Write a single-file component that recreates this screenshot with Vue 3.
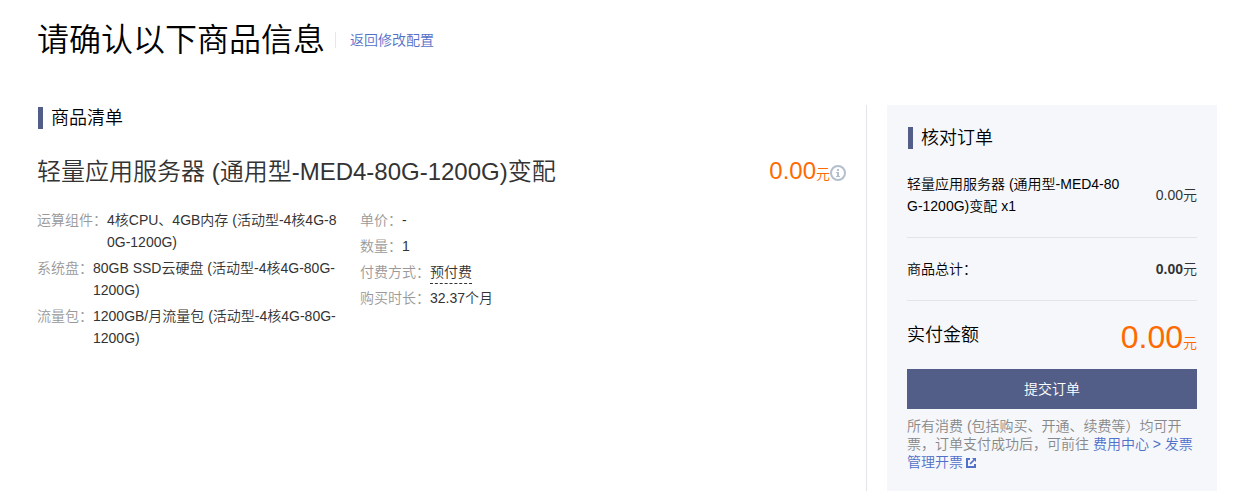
<template>
    <div class="order-page">

        <header class="page-header">
            <h1>请确认以下商品信息</h1>
            <a class="back-link" href="#">返回修改配置</a>
        </header>

        <div class="page-body">
            <main class="goods">
                <h2 class="section-title">商品清单</h2>

                <div class="goods-head">
                    <h3>{{ goods.name }}</h3>
                    <div class="goods-price">
                        <span class="amount">{{ goods.price }}</span><span class="unit">元</span>
                        <svg class="info-icon" viewBox="0 0 16 16" width="16" height="16">
                            <circle cx="8" cy="8" r="7" fill="none" stroke="#b3bfcc" stroke-width="2" />
                            <path d="M7 4h2v2H7zM6 7h3v4h1v1H6v-1h1V8H6z" fill="#b3bfcc" />
                        </svg>
                    </div>
                </div>

                <div class="goods-detail">
                    <dl v-for="(column, index) in detailColumns" :key="index" class="detail-column">
                        <div v-for="item in column" :key="item.label" class="detail-row">
                            <dt>{{ item.label }}：</dt>
                            <dd :class="{ 'has-tip': item.tip }">{{ item.value }}</dd>
                        </div>
                    </dl>
                </div>
            </main>

            <aside class="summary">
                <h2 class="section-title">核对订单</h2>

                <div class="summary-row summary-goods">
                    <span class="summary-name">{{ goods.name }} x{{ goods.count }}</span>
                    <span class="summary-value">{{ goods.price }}元</span>
                </div>
                <div class="summary-row summary-total">
                    <span>商品总计：</span>
                    <span class="summary-value"><b>{{ goods.price }}</b>元</span>
                </div>
                <div class="summary-pay">
                    <span class="pay-label">实付金额</span>
                    <span class="pay-price"><span class="amount">{{ goods.price }}</span><span class="unit">元</span></span>
                </div>

                <button type="button" class="submit-btn">提交订单</button>

                <p class="invoice-note">
                    所有消费 (包括购买、开通、续费等）均可开票，订单支付成功后，可前往 <a href="#">费用中心 &gt; 发票管理开票<svg class="link-icon" viewBox="0 0 10 10" width="10" height="10">
                            <path d="M4 1H1v8h8V6" fill="none" stroke="currentColor" stroke-width="2" />
                            <path d="M6 0h4v4L8.6 2.6 4.7 6.5 3.5 5.3 7.4 1.4z" fill="currentColor" />
                        </svg></a>
                </p>
            </aside>
        </div>

    </div>
</template>

<script setup>
import { ref } from 'vue';

const goods = ref({
    name: '轻量应用服务器 (通用型-MED4-80G-1200G)变配',
    price: '0.00',
    count: 1
});

const detailColumns = ref([
    [
        { label: '运算组件', value: '4核CPU、4GB内存 (活动型-4核4G-80G-1200G)' },
        { label: '系统盘', value: '80GB SSD云硬盘 (活动型-4核4G-80G-1200G)' },
        { label: '流量包', value: '1200GB/月流量包 (活动型-4核4G-80G-1200G)' }
    ],
    [
        { label: '单价', value: '-' },
        { label: '数量', value: '1' },
        { label: '付费方式', value: '预付费', tip: true },
        { label: '购买时长', value: '32.37个月' }
    ]
]);
</script>

<style>
body {
    margin: 0;
    background: #fff;
}
</style>

<style scoped>
.order-page {
    box-sizing: border-box;
    padding: 16px 21px 10px 37px;
    font-family: "Liberation Sans", "Noto Sans CJK SC", sans-serif;
    font-size: 14px;
    font-weight: 350;
    line-height: 22px;
    color: #333;
}

h1,
h2,
h3,
dl,
dd,
p {
    margin: 0;
    font-weight: 350;
}

b {
    font-weight: 700;
}

a {
    color: #5170c9;
    text-decoration: none;
}

/* HEADER */
.page-header {
    display: flex;
    align-items: center;
    gap: 10px;
    margin-bottom: 41px;
}

.page-header h1 {
    font-size: 32px;
    line-height: 48px;
    color: #000;
}

.back-link {
    border-left: 1px solid #e5e5eb;
    padding-left: 14px;
    line-height: 16px;
}

.page-body {
    display: flex;
    gap: 20px;
}

.section-title {
    margin-left: 1px;
    padding-left: 8px;
    border-left: 5px solid #525e88;
    font-size: 18px;
    line-height: 22px;
    color: #000;
}

/* GOODS */
.goods {
    flex: 1;
    padding: 2px 20px 0 0;
    border-right: 1px solid #e3e4e9;
}

.goods-head {
    display: flex;
    justify-content: space-between;
    align-items: center;
    height: 36px;
    margin: 25px 0 19px;
}

.goods-head h3 {
    font-size: 24px;
    line-height: 36px;
}

.goods-price {
    display: flex;
    align-items: baseline;
    color: #ff6a00;
    line-height: 36px;
}

.goods-price .amount {
    font-size: 24px;
}

.info-icon {
    align-self: center;
    margin-top: 2px;
}

.goods-detail {
    display: flex;
    gap: 23px;
}

.detail-column {
    width: 300px;
}

.detail-row {
    display: flex;
    margin-bottom: 4px;
}

.detail-row dt {
    flex: none;
    color: #999;
}

.detail-row dd {
    word-break: break-all;
}

.detail-row .has-tip {
    margin-bottom: -1px;
    border-bottom: 1px dashed #333;
}

/* SUMMARY */
.summary {
    box-sizing: border-box;
    flex: none;
    width: 330px;
    padding: 22px 20px 20px;
    background: #f5f7fb;
    color: #000;
}

.summary-row {
    display: flex;
    justify-content: space-between;
    align-items: center;
    padding: 20px 0;
    border-bottom: 1px solid #e3e4e9;
}

.summary-goods {
    margin-top: 4px;
}

.summary-name {
    width: 216px;
    word-break: break-all;
}

.summary-value {
    color: #333;
}

.summary-pay {
    display: flex;
    justify-content: space-between;
    align-items: flex-start;
    height: 44px;
    padding: 16px 0 8px;
}

.pay-label {
    font-size: 18px;
    line-height: 36px;
}

.pay-price {
    line-height: 40px;
    color: #ff6a00;
}

.pay-price .amount {
    font-size: 32px;
}

.submit-btn {
    display: block;
    width: 100%;
    height: 40px;
    padding: 0;
    border: none;
    background: #525e88;
    color: #fff;
    font: inherit;
    cursor: pointer;
}

.invoice-note {
    margin-top: 8px;
    line-height: 18px;
    color: #888;
}

.link-icon {
    margin-left: 3px;
    vertical-align: -1px;
}
</style>
